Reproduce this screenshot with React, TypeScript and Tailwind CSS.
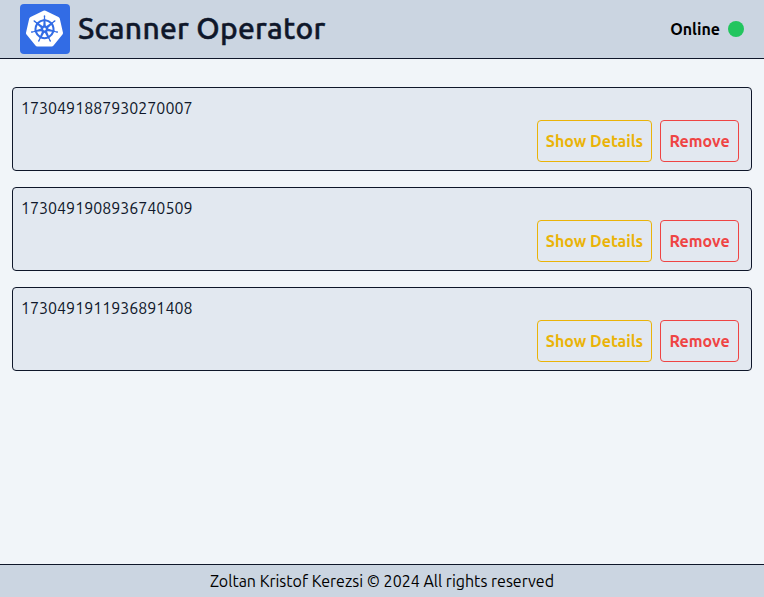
import { SiKubernetes } from "react-icons/si";

const scans = ["1730491887930270007", "1730491908936740509", "1730491911936891408"];

function Header() {
  return (
    <header className="flex h-[59px] items-center justify-between border-b border-[#0f172a] bg-[#cbd5e1] px-5">
      <div className="flex items-center gap-2">
        <div className="flex h-[50px] w-[50px] items-start justify-center rounded bg-[#326ce5] pt-[5.5px] pr-px">
          <SiKubernetes className="h-[37px] w-[37px] text-white" />
        </div>
        <h1 className="pb-0.5 text-[30px] leading-9 font-medium tracking-[0.25px] whitespace-nowrap text-[#0f172a] [-webkit-text-stroke:0.45px_#0f172a]">
          Scanner Operator
        </h1>
      </div>
      <div className="flex items-center gap-2">
        <span className="font-semibold text-black">Online</span>
        <span className="h-4 w-4 rounded-full bg-[#22c55e]" />
      </div>
    </header>
  );
}

function ScanCard({ id }: { id: string }) {
  return (
    <article className="rounded border border-[#0f172a] bg-[#e2e8f0] p-2 text-[#0f172a]">
      <div>{id}</div>
      <div className="flex justify-end gap-2 pr-1">
        <button className="h-[42px] w-[115px] rounded border border-[#eab308] font-semibold whitespace-nowrap text-[#eab308]">
          Show Details
        </button>
        <button className="h-[42px] w-[79px] rounded border border-[#ef4444] font-semibold whitespace-nowrap text-[#ef4444]">
          Remove
        </button>
      </div>
    </article>
  );
}

export default function App() {
  return (
    <div className="flex h-screen flex-col bg-[#f1f5f9] font-['Ubuntu','Noto_Sans',sans-serif] text-base">
      <Header />
      <main className="flex flex-1 flex-col gap-4 px-3 pt-7">
        {scans.map((id) => (
          <ScanCard key={id} id={id} />
        ))}
      </main>
      <footer className="h-[33px] border-t border-[#0f172a] bg-[#cbd5e1] pt-1 text-center text-black">
        <span>Zoltan Kristof Kerezsi © 2024 All rights reserved</span>
      </footer>
    </div>
  );
}
